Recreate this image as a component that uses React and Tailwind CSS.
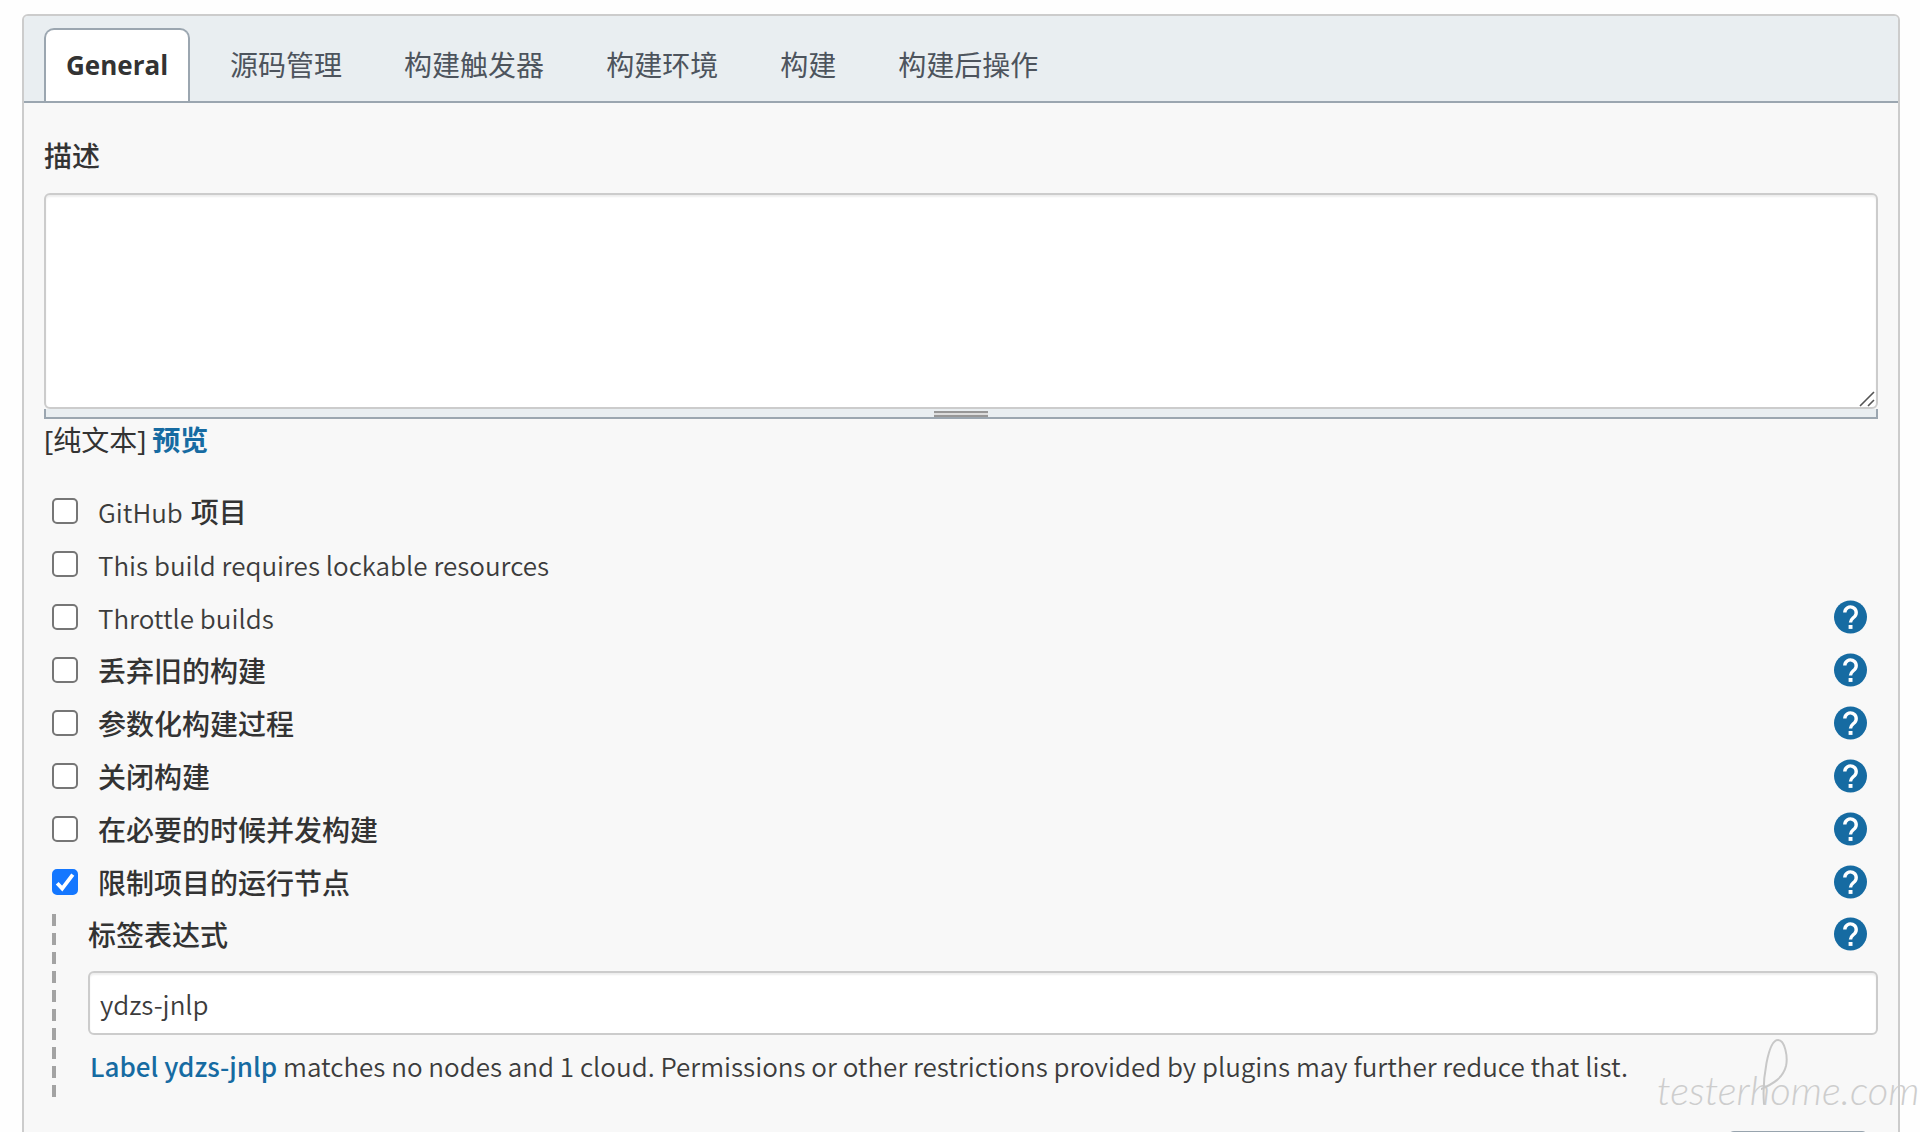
import { useState } from "react";

const tabs = ["General", "源码管理", "构建触发器", "构建环境", "构建", "构建后操作"];

const initialOptions = [
  { id: "github", latin: "GitHub", label: "项目", help: false, checked: false },
  { id: "lockable", latin: "This build requires lockable resources", help: false, checked: false },
  { id: "throttle", latin: "Throttle builds", help: true, checked: false },
  { id: "discard", label: "丢弃旧的构建", help: true, checked: false },
  { id: "params", label: "参数化构建过程", help: true, checked: false },
  { id: "disable", label: "关闭构建", help: true, checked: false },
  { id: "concurrent", label: "在必要的时候并发构建", help: true, checked: false },
  { id: "restrict", label: "限制项目的运行节点", help: true, checked: true },
];

const HelpButton = ({ label }) => (
  <button type="button" aria-label={label} className="mr-2.5 size-[34px] shrink-0">
    <svg viewBox="0 0 34 34" className="size-full">
      <circle cx="16.5" cy="17" r="16.5" fill="#166ba2" />
      <path
        d="M10.8 12.6a5.7 5.7 0 1 1 9.8 4c-2 2-4.1 2.9-4.1 6"
        fill="none"
        stroke="#fff"
        strokeWidth="3.4"
      />
      <rect x="14.6" y="25" width="3.9" height="3.9" fill="#fff" />
    </svg>
  </button>
);

const OptionRow = ({ option, onToggle }) => (
  <div className="flex h-[53px] items-center justify-between">
    <div className="flex items-center pl-2">
      <span className="grid size-[26px]">
        <input
          id={option.id}
          type="checkbox"
          checked={option.checked}
          onChange={() => onToggle(option.id)}
          className="peer col-start-1 row-start-1 size-[26px] appearance-none rounded-[5px] border-2 border-[#767676] bg-white checked:border-[#1477ff] checked:bg-[#1477ff]"
        />
        <svg
          viewBox="0 0 26 26"
          className="pointer-events-none invisible col-start-1 row-start-1 size-[26px] peer-checked:visible"
        >
          <path d="M5.2 14.2l5 5.4L20.8 5.6" fill="none" stroke="#fff" strokeWidth="3.8" />
        </svg>
      </span>
      <label htmlFor={option.id} className="flex items-baseline gap-2 pt-[3px] pl-5">
        {option.latin && (
          <span className="font-['Noto_Sans_CJK_SC',sans-serif] text-[26px] font-[350] text-[#3c3c3c]">
            {option.latin}
          </span>
        )}
        {option.label && <span className="font-medium">{option.label}</span>}
      </label>
    </div>
    {option.help && <HelpButton label={`Help: ${option.label || option.latin}`} />}
  </div>
);

const Watermark = () => (
  <div className="pointer-events-none absolute top-[1072px] left-[1657px] font-[Lato] text-[40px] leading-9 font-light whitespace-nowrap text-[#cdcdcd] italic">
    testerhome.com
    <svg viewBox="0 0 40 70" className="absolute -top-[34px] left-[104px] h-[70px] w-10" fill="none">
      <path
        d="M3 66C1 42 7 2 17 2c7 0 10 17 8 26C22 40 12 46 0 51"
        stroke="#c8c8c8"
        strokeWidth="2"
        strokeLinecap="round"
      />
    </svg>
  </div>
);

const App = () => {
  const [activeTab, setActiveTab] = useState("General");
  const [options, setOptions] = useState(initialOptions);
  const [description, setDescription] = useState("");
  const [nodeLabel, setNodeLabel] = useState("ydzs-jnlp");

  const toggleOption = (id) => {
    setOptions(options.map((o) => (o.id === id ? { ...o, checked: !o.checked } : o)));
  };

  return (
    <div
      lang="zh-CN"
      className="relative h-screen overflow-hidden bg-[#fefefe] pt-3.5 pr-5 pl-[22px] font-['Open_Sans','Noto_Sans_CJK_SC',sans-serif] text-[28px] leading-9 text-[#333]"
    >
      <main className="rounded-md border-2 border-[#ccc] bg-[#f8f8f8]">
        <nav className="flex gap-[18px] rounded-t-sm border-b-2 border-[#9ba6b0] bg-[#e9eef1] px-5 pt-3">
          {tabs.map((tab) => (
            <button
              key={tab}
              type="button"
              onClick={() => setActiveTab(tab)}
              className={`h-[73px] rounded-t-[10px] border-2 border-b-0 px-5 pb-0.5 ${
                activeTab === tab
                  ? "border-[#9ba6b0] bg-white text-[26px] font-bold text-[#333]"
                  : "border-transparent text-[#4d545d]"
              }`}
            >
              {tab}
            </button>
          ))}
        </nav>

        <form className="px-5 pt-[35px]" onSubmit={(e) => e.preventDefault()}>
          <label htmlFor="description" className="block font-medium">
            描述
          </label>
          <div className="relative mt-[19px]">
            <textarea
              id="description"
              value={description}
              onChange={(e) => setDescription(e.target.value)}
              className="block h-[216px] w-full resize-none rounded-md border-2 border-[#ccc] bg-white p-2 shadow-[inset_0_2px_2px_#eee] outline-none"
            />
            <svg viewBox="0 0 16 16" className="absolute right-[3px] bottom-0.5 size-4" fill="none">
              <path d="M1 15L15 1M9 15l6-6" stroke="#555" strokeWidth="1.6" />
            </svg>
          </div>
          <div className="flex h-2.5 justify-center border-2 border-t-0 border-[#9ba6b0] bg-[#e9eef1] pt-0.5">
            <div className="h-[6px] w-[54px] border-y-2 border-[#979797] bg-[#ddd]" />
          </div>
          <div className="flex items-baseline gap-1.5 pt-[3px]">
            <span>[纯文本]</span>
            <a href="#preview" className="font-bold text-[#166ba2]">
              预览
            </a>
          </div>

          <div className="pt-[26px]">
            {options.map((option) => (
              <OptionRow key={option.id} option={option} onToggle={toggleOption} />
            ))}
          </div>

          <div className="flex">
            <div className="mt-1.5 ml-2 h-[185px] w-1 bg-[repeating-linear-gradient(to_bottom,#a3a3a3_0_12px,transparent_12px_19px)]" />
            <div className="grow pl-8">
              <div className="flex h-[51px] items-center justify-between">
                <label htmlFor="node-label" className="pt-[3px] font-medium">
                  标签表达式
                </label>
                <HelpButton label="Help: 标签表达式" />
              </div>
              <input
                id="node-label"
                type="text"
                value={nodeLabel}
                onChange={(e) => setNodeLabel(e.target.value)}
                className="mt-3 h-16 w-full rounded-md border-2 border-[#ccc] bg-white px-2.5 font-['Noto_Sans_CJK_SC',sans-serif] text-[26px] font-[350] text-[#3c3c3c] shadow-[inset_0_2px_2px_#eee] outline-none"
              />
              <p className="pt-[13px] pl-0.5 font-['Noto_Sans_CJK_SC',sans-serif] text-[26px] font-[350] text-[#3c3c3c]">
                <a href="#label" className="font-medium text-[#166ba2]">
                  Label ydzs-jnlp
                </a>{" "}
                matches no nodes and 1 cloud. Permissions or other restrictions provided by plugins
                may further reduce that list.
              </p>
            </div>
          </div>

          <div className="flex justify-end pt-8 pr-2.5">
            <button
              type="button"
              aria-label="Advanced"
              className="h-14 w-[140px] rounded-md bg-[#98a4ae]"
            />
          </div>
        </form>
      </main>
      <Watermark />
    </div>
  );
};

export default App;
